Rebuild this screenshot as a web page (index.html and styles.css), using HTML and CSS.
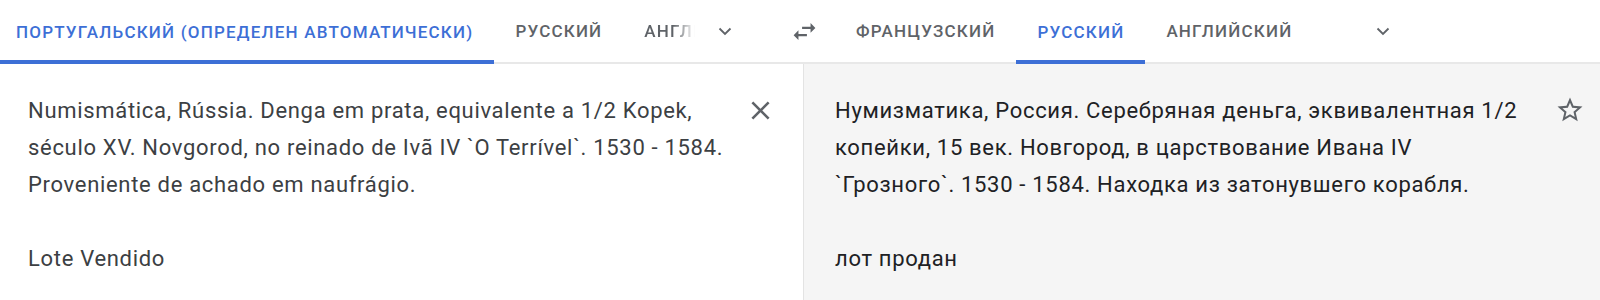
FILE: index.html
```html
<!DOCTYPE html>
<html lang="ru">
<head>
    <meta charset="UTF-8">
    <meta name="viewport" content="width=device-width, initial-scale=1.0">
    <title>Переводчик</title>
    <link rel="stylesheet" href="styles.css">
</head>
<body>
    <div class="lang-bar">
        <div class="lang-side source">
            <div class="tab active first">ПОРТУГАЛЬСКИЙ (ОПРЕДЕЛЕН АВТОМАТИЧЕСКИ)</div>
            <div class="tab">РУССКИЙ</div>
            <div class="tab faded">АНГЛИЙСКИЙ</div>
            <button class="icon-btn chevron" aria-label="Ещё языки">
                <svg viewBox="0 0 24 24" width="24" height="24"><polyline points="6.5,9.5 12,15 17.5,9.5" fill="none" stroke="#5f6368" stroke-width="1.8"/></svg>
            </button>
        </div>
        <button class="icon-btn swap" aria-label="Поменять языки">
            <svg viewBox="0 0 24 24" width="29" height="29"><path fill="#5f6368" d="M6.99 11L3 15l3.99 4v-3H14v-2H6.99v-3zM21 9l-3.99-4v3H10v2h7.01v3L21 9z"/></svg>
        </button>
        <div class="lang-side target">
            <div class="tab">ФРАНЦУЗСКИЙ</div>
            <div class="tab active">РУССКИЙ</div>
            <div class="tab">АНГЛИЙСКИЙ</div>
            <button class="icon-btn chevron" aria-label="Ещё языки">
                <svg viewBox="0 0 24 24" width="24" height="24"><polyline points="6.5,9.5 12,15 17.5,9.5" fill="none" stroke="#5f6368" stroke-width="1.8"/></svg>
            </button>
        </div>
    </div>

    <div class="panels">
        <div class="panel source-panel">
            <div class="text">
                <p>Numismática, Rússia. Denga em prata, equivalente a 1/2 Kopek, século XV. Novgorod, no reinado de Ivã IV `O Terrível`. 1530 - 1584. Proveniente de achado em naufrágio.</p>
                <p>Lote Vendido</p>
            </div>
            <button class="icon-btn clear" aria-label="Очистить">
                <svg viewBox="0 0 24 24" width="31" height="31"><path fill="#5f6368" d="M19 6.41L17.59 5 12 10.59 6.41 5 5 6.41 10.59 12 5 17.59 6.41 19 12 13.41 17.59 19 19 17.59 13.41 12z"/></svg>
            </button>
        </div>
        <div class="panel target-panel">
            <div class="text">
                <p>Нумизматика, Россия. Серебряная деньга, эквивалентная 1/2 копейки, 15 век. Новгород, в царствование Ивана IV<br>`Грозного`. 1530 - 1584. Находка из затонувшего корабля.</p>
                <p>лот продан</p>
            </div>
            <button class="icon-btn star" aria-label="Сохранить">
                <svg viewBox="0 0 24 24" width="30" height="30"><path fill="#5f6368" d="M22 9.24l-7.19-.62L12 2 9.19 8.63 2 9.24l5.46 4.73L5.82 21 12 17.270 18.18 21l-1.63-7.03L22 9.24zM12 15.4l-3.76 2.27 1-4.28-3.32-2.88 4.38-.38L12 6.1l1.710 4.04 4.38.38-3.32 2.88 1 4.28L12 15.4z"/></svg>
            </button>
        </div>
    </div>
</body>
</html>
```

FILE: styles.css
```css
body {
    margin: 0;
    font-family: Roboto, "Noto Sans", Arial, sans-serif;
    background-color: #fff;
    overflow: hidden;
}

.lang-bar {
    display: flex;
    align-items: center;
    height: 64px;
    box-sizing: border-box;
    border-bottom: 2px solid #e8e8e8;
}

.lang-side {
    display: flex;
    align-items: center;
    height: 100%;
}

.source {
    width: 790px;
}

.target {
    flex: 1;
    padding-left: 16px;
}

.tab {
    display: flex;
    align-items: center;
    box-sizing: border-box;
    height: 62px;
    padding: 0 21px;
    font-size: 17px;
    font-weight: 500;
    letter-spacing: 1.2px;
    color: #5f6368;
    white-space: nowrap;
}

.tab.first {
    padding-left: 16px;
}

.tab.active {
    color: #3d6fd6;
    height: 64px;
    margin-bottom: -2px;
    border-bottom: 4px solid #3d6fd6;
    padding-top: 4px;
}

.tab.faded {
    width: 80px;
    overflow: hidden;
    padding-right: 0;
    -webkit-mask-image: linear-gradient(to right, #000 50px, transparent 72px);
    mask-image: linear-gradient(to right, #000 50px, transparent 72px);
}

.icon-btn {
    display: flex;
    align-items: center;
    justify-content: center;
    background: none;
    border: none;
    padding: 0;
    cursor: pointer;
}

.chevron {
    width: 24px;
    height: 24px;
    margin-left: 10px;
}

.target .chevron {
    margin-left: 58px;
}

.swap {
    width: 29px;
    height: 29px;
}

.panels {
    display: flex;
    height: 236px;
}

.panel {
    display: flex;
    align-items: flex-start;
    box-sizing: border-box;
    padding-top: 28px;
}

.text p {
    margin: 0 0 37px 0;
    font-size: 22px;
    line-height: 37px;
    letter-spacing: 0.03125em;
}

.source-panel {
    width: 803px;
    padding-left: 28px;
}

.source-panel .text {
    width: 705px;
    color: #3c4043;
}

.clear {
    width: 31px;
    height: 31px;
    margin-left: 12px;
    margin-top: 3px;
}

.target-panel {
    flex: 1;
    background-color: #f5f5f5;
    border-left: 1px solid #e3e3e3;
    padding-left: 31px;
}

.target-panel .text {
    width: 705px;
    color: #202124;
}

.star {
    width: 30px;
    height: 30px;
    margin-left: 15px;
    margin-top: 3px;
}
```
